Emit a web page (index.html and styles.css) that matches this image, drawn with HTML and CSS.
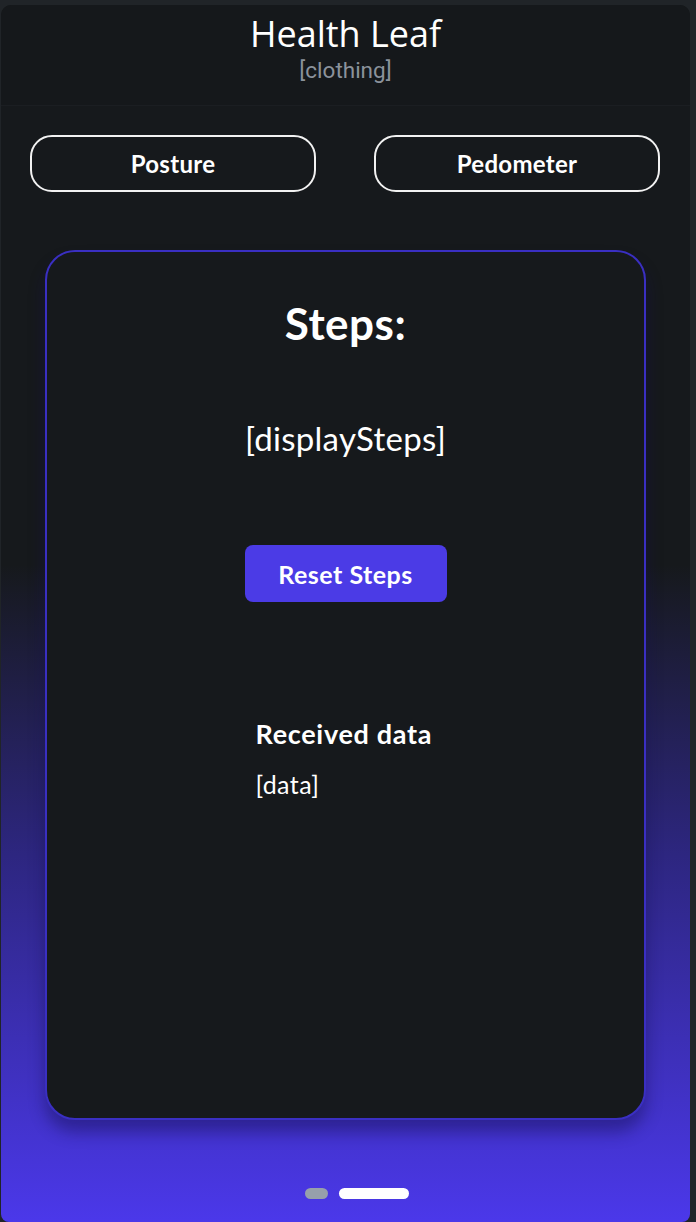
FILE: index.html
```html
<!DOCTYPE html>
<html>
<head>
<meta charset="utf-8">
<link rel="stylesheet" href="styles.css">
</head>
<body>
<div class="app">
  <header class="header">
    <h1 class="title">Health Leaf</h1>
    <div class="subtitle">[clothing]</div>
  </header>
  <nav class="tabs">
    <button class="tab">Posture</button>
    <button class="tab">Pedometer</button>
  </nav>
  <section class="card">
    <h2 class="steps-title">Steps:</h2>
    <div class="steps-value">[displaySteps]</div>
    <button class="reset">Reset Steps</button>
    <div class="received">
      <h3 class="received-title">Received data</h3>
      <div class="received-value">[data]</div>
    </div>
  </section>
  <div class="dots">
    <span class="dot"></span>
    <span class="dot active"></span>
  </div>
</div>
</body>
</html>
```
FILE: styles.css
```css
html, body { margin: 0; padding: 0; }
body {
  background: #202428;
  width: 696px;
  height: 1222px;
  overflow: hidden;
  font-family: Lato, "Open Sans", sans-serif;
  color: #fff;
}
.app {
  margin: 5px 6px 0 1px;
  height: 1217px;
  border-radius: 10px 10px 8px 8px;
  background: linear-gradient(180deg, #16191c 0px, #16191c 560px, #2d2680 850px, #4b38ea 1217px);
  display: flex;
  flex-direction: column;
  align-items: center;
  overflow: hidden;
}
.header {
  align-self: stretch;
  height: 101px;
  background: #15181b;
  border-bottom: 1px solid #1b1e22;
  display: flex;
  flex-direction: column;
  align-items: center;
  box-sizing: border-box;
  padding-top: 9px;
}
.title {
  margin: 0;
  font-family: "Open Sans", sans-serif;
  font-weight: 400;
  font-size: 36px;
  line-height: 40px;
}
.subtitle {
  font-family: Roboto, sans-serif;
  font-size: 22.5px;
  color: #8b929b;
  line-height: 26px;
  margin-top: 3px;
}
.tabs {
  align-self: stretch;
  display: flex;
  justify-content: space-between;
  padding: 29px 30px 0 29px;
}
.tab {
  width: 286px;
  height: 57px;
  border: 2px solid #f2f2f2;
  border-radius: 22px;
  background: transparent;
  color: #fff;
  font-family: Lato, sans-serif;
  font-weight: 700;
  font-size: 24px;
  letter-spacing: 0.3px;
}
.card {
  margin-top: 58px;
  width: 601px;
  height: 870px;
  box-sizing: border-box;
  border: 2px solid #3a2fc2;
  border-radius: 30px;
  background: #16191c;
  box-shadow: 0 12px 16px rgba(20, 15, 80, 0.45);
  display: flex;
  flex-direction: column;
  align-items: center;
  padding-top: 46px;
}
.steps-title {
  margin: 0;
  font-family: Lato, sans-serif;
  font-weight: 700;
  font-size: 44px;
  line-height: 50px;
  letter-spacing: 0.5px;
}
.steps-value {
  margin-top: 71px;
  font-size: 33px;
  line-height: 38px;
  letter-spacing: 0.3px;
}
.reset {
  margin-top: 88px;
  width: 202px;
  height: 57px;
  border: none;
  border-radius: 8px;
  background: #4b3be6;
  color: #fff;
  font-family: Lato, sans-serif;
  font-weight: 700;
  font-size: 25px;
  letter-spacing: 0.5px;
}
.received {
  margin-top: 116px;
  width: 180px;
  margin-left: 0;
}
.received-title {
  margin: 0;
  font-weight: 700;
  font-size: 27px;
  line-height: 32px;
  letter-spacing: 0.7px;
  white-space: nowrap;
}
.received-value {
  margin-top: 19px;
  font-size: 25px;
  line-height: 30px;
  letter-spacing: 0.4px;
}
.dots {
  margin-top: 68px;
  display: flex;
  gap: 11px;
  margin-left: 22px;
}
.dot {
  width: 23px;
  height: 11px;
  border-radius: 6px;
  background: #97a0ab;
}
.dot.active {
  width: 70px;
  background: #fff;
}
```
